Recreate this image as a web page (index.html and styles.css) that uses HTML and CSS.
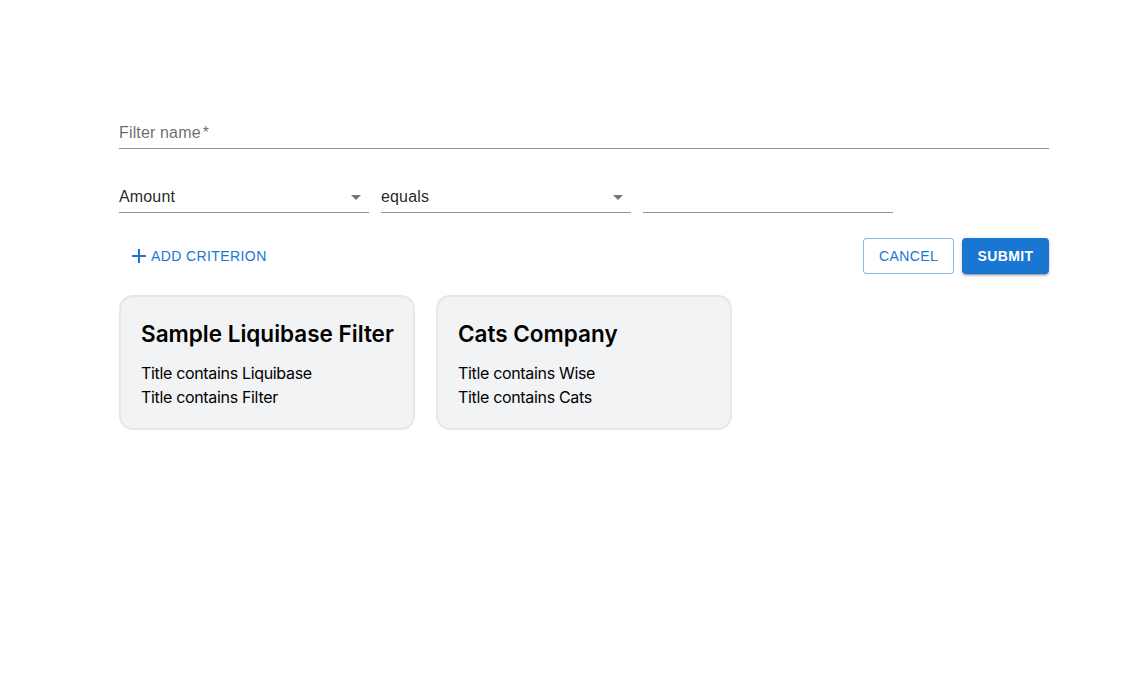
FILE: index.html
```html
<!DOCTYPE html>
<html>
<head>
<meta charset="utf-8">
<link rel="stylesheet" href="styles.css">
</head>
<body>
<div class="page">
  <form class="filter-form">
    <div class="field field-full">
      <label class="field-label">Filter name<span class="req">*</span></label>
      <div class="field-input"><input type="text"></div>
    </div>

    <div class="criteria-row">
      <div class="field field-select">
        <div class="field-input"><span class="select-value">Amount</span>
          <svg class="arrow" viewBox="0 0 24 24"><path d="M7 10l5 5 5-5z"/></svg>
        </div>
      </div>
      <div class="field field-select">
        <div class="field-input"><span class="select-value">equals</span>
          <svg class="arrow" viewBox="0 0 24 24"><path d="M7 10l5 5 5-5z"/></svg>
        </div>
      </div>
      <div class="field field-select">
        <div class="field-input"><input type="text"></div>
      </div>
    </div>

    <div class="actions">
      <button type="button" class="btn btn-text">
        <svg class="plus" viewBox="0 0 24 24"><path d="M19 13h-6v6h-2v-6H5v-2h6V5h2v6h6v2z"/></svg>
        Add criterion
      </button>
      <div class="actions-right">
        <button type="button" class="btn btn-outlined">Cancel</button>
        <button type="button" class="btn btn-contained">Submit</button>
      </div>
    </div>
  </form>

  <div class="cards">
    <div class="card">
      <h2 class="card-title">Sample Liquibase Filter</h2>
      <p class="card-line">Title contains Liquibase</p>
      <p class="card-line">Title contains Filter</p>
    </div>
    <div class="card">
      <h2 class="card-title">Cats Company</h2>
      <p class="card-line">Title contains Wise</p>
      <p class="card-line">Title contains Cats</p>
    </div>
  </div>
</div>
</body>
</html>
```

FILE: styles.css
```css
* { box-sizing: border-box; }

html, body {
  margin: 0;
  padding: 0;
  background: #fff;
}

body {
  font-family: "Liberation Sans", Arial, Helvetica, sans-serif;
  color: rgba(0, 0, 0, 0.87);
}

.page {
  width: 930px;
  margin-left: 119px;
  padding-top: 101px;
}

.filter-form {
  display: flex;
  flex-direction: column;
}

.field {
  position: relative;
  height: 48px;
  padding-top: 16px;
}

.field-label {
  position: absolute;
  left: 0;
  top: 20px;
  font-size: 16px;
  line-height: 23px;
  color: rgba(0, 0, 0, 0.6);
  letter-spacing: 0.00938em;
}

.req {
  margin-left: 2px;
}

.field-input {
  position: relative;
  display: flex;
  align-items: center;
  height: 32px;
  padding: 4px 0 5px;
  border-bottom: 1px solid rgba(0, 0, 0, 0.42);
}

.field-input input {
  border: 0;
  outline: 0;
  background: transparent;
  width: 100%;
  height: 23px;
  padding: 0;
  font: inherit;
  font-size: 16px;
}

.criteria-row {
  display: flex;
  gap: 12px;
  margin-top: 16px;
}

.field-select {
  width: 250px;
}

.select-value {
  font-size: 16px;
  line-height: 23px;
  letter-spacing: 0.00938em;
}

.arrow {
  position: absolute;
  right: 1px;
  top: 4px;
  width: 24px;
  height: 24px;
  fill: rgba(0, 0, 0, 0.54);
}

.actions {
  display: flex;
  justify-content: space-between;
  align-items: center;
  margin-top: 25px;
}

.actions-right {
  display: flex;
  gap: 8px;
}

.btn {
  font-family: "Liberation Sans", Arial, Helvetica, sans-serif;
  font-size: 14px;
  font-weight: 500;
  letter-spacing: 0.02857em;
  text-transform: uppercase;
  height: 36px;
  border-radius: 4px;
  display: inline-flex;
  align-items: center;
  justify-content: center;
  cursor: pointer;
  line-height: 1;
}

.btn-text {
  background: transparent;
  border: 0;
  color: #1976d2;
  padding: 0 8px 0 8px;
}

.plus {
  width: 24px;
  height: 24px;
  fill: #1976d2;
}

.btn-outlined {
  background: #fff;
  color: #1976d2;
  border: 1px solid rgba(25, 118, 210, 0.5);
  width: 91px;
  padding: 0;
}

.btn-contained {
  background: #1976d2;
  color: #fff;
  border: 0;
  width: 87px;
  padding: 0;
  font-weight: 700;
  box-shadow: 0 3px 1px -2px rgba(0, 0, 0, 0.2), 0 2px 2px 0 rgba(0, 0, 0, 0.14), 0 1px 5px 0 rgba(0, 0, 0, 0.12);
}

.cards {
  display: flex;
  gap: 21px;
  margin-top: 21px;
}

.card {
  width: 296px;
  background: #f2f3f5;
  border: 2px solid #e5e7eb;
  border-radius: 14px;
  padding: 21px 20px 19px;
  font-family: Inter, "Noto Sans", sans-serif;
  color: #000;
}

.card-title {
  margin: 0 0 11px;
  font-size: 22.5px;
  line-height: 32px;
  font-weight: 600;
  letter-spacing: 0;
  white-space: nowrap;
}

.card-line {
  margin: 0;
  font-size: 16px;
  line-height: 24px;
  letter-spacing: -0.33px;
}
```
